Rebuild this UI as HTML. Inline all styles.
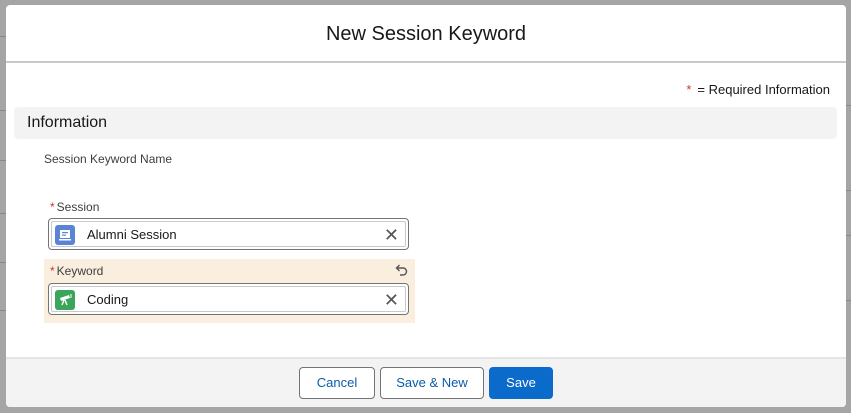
<!DOCTYPE html>
<html><head><meta charset="utf-8"><style>
*{box-sizing:border-box;margin:0;padding:0}
body{width:851px;height:413px;background:#a5a5a5;font-family:"Liberation Sans",sans-serif;position:relative;overflow:hidden;color:#181818}
.bgl{position:absolute;left:0;width:6px;height:1px;background:#888}
.bgr{position:absolute;left:846px;width:5px;height:1px;background:#888}
.modal{position:absolute;left:6px;top:5px;width:840px;height:402px;background:#fff;border-radius:4px;overflow:hidden}
.hdr{height:58px;border-bottom:2px solid #c9c9c9;text-align:center;font-size:20px;line-height:58px;color:#181818}
.req{position:absolute;right:16px;top:77px;font-size:13px}
.req b{color:#c23934;font-weight:normal;margin-right:6px}
.info{position:absolute;left:8px;top:102px;width:823px;height:32px;background:#f3f3f3;border-radius:4px;font-size:16px;line-height:32px;padding-left:13px}
.skn{position:absolute;left:38px;top:147px;font-size:12px;color:#3e3e3c}
.lbl{position:absolute;font-size:12px;color:#3e3e3c}
.lbl i{color:#c23934;font-style:normal;margin-right:2px}
.hl{position:absolute;left:38px;top:254px;width:371px;height:64px;background:#faefdf}
.inp{position:absolute;left:42px;width:361px;height:32px;border:1px solid #747474;border-radius:4px;padding:2px;background:#fff}
.inp .in{width:100%;height:100%;border:1px solid #c9c9c9;border-radius:2px;position:relative;font-size:13px;line-height:26px;padding-left:35px;background:#fff}
.ic{position:absolute;left:3px;top:3px;width:20px;height:20px;border-radius:3px}
.x{position:absolute;right:6px;top:0;font-size:18px;color:#555;line-height:26px}
.ftr{position:absolute;left:0;top:352px;width:840px;height:50px;background:#f3f3f3;border-top:2px solid #e5e5e5}
.btn{position:absolute;top:8px;height:32px;border:1px solid #747474;border-radius:4px;background:#fff;color:#0b5cab;font-size:13px;line-height:30px;text-align:center}
</style></head><body>
<div class="bgl" style="top:36px"></div><div class="bgl" style="top:110px"></div><div class="bgl" style="top:160px"></div><div class="bgl" style="top:213px"></div><div class="bgl" style="top:262px"></div><div class="bgl" style="top:310px"></div>
<div class="bgr" style="top:105px"></div><div class="bgr" style="top:190px"></div><div class="bgr" style="top:235px"></div><div class="bgr" style="top:300px"></div>
<div class="modal">
<div class="hdr">New Session Keyword</div>
<div class="req"><b>*</b>= Required Information</div>
<div class="info">Information</div>
<div class="skn">Session Keyword Name</div>
<div class="lbl" style="left:44px;top:195px"><i>*</i>Session</div>
<div class="inp" style="top:213px"><div class="in"><div class="ic" style="background:#5a84d6"><svg width="20" height="20"><rect x="5" y="5" width="10" height="8" fill="#fff"/><rect x="7" y="7" width="6" height="1.2" fill="#5a84d6"/><rect x="7" y="9.5" width="4" height="1.2" fill="#5a84d6"/><rect x="4" y="14" width="12" height="1.5" fill="#fff"/></svg></div>Alumni Session<span class="x">✕</span></div></div>
<div class="hl"></div>
<div class="lbl" style="left:44px;top:259px"><i>*</i>Keyword</div>
<svg style="position:absolute;left:388px;top:258px" width="14" height="14" viewBox="0 0 14 14"><path d="M3 5 H9 A3.5 3.5 0 0 1 9 12 H6" fill="none" stroke="#555" stroke-width="1.4"/><path d="M5.5 2 L2.5 5 L5.5 8" fill="none" stroke="#555" stroke-width="1.4"/></svg>
<div class="inp" style="top:278px"><div class="in"><div class="ic" style="background:#3ba55c"><svg width="20" height="20"><path d="M5 8 L14 5 L15 8 L6 11Z" fill="#fff"/><path d="M9 10 L7 15 M10 10 L12 15" stroke="#fff" stroke-width="1.4"/><path d="M16 4 V8" stroke="#fff" stroke-width="1"/></svg></div>Coding<span class="x">✕</span></div></div>
<div class="ftr">
<div class="btn" style="left:293px;width:76px">Cancel</div>
<div class="btn" style="left:374px;width:104px">Save &amp; New</div>
<div class="btn" style="left:483px;width:64px;background:#0b6bcb;border-color:#0b6bcb;color:#fff">Save</div>
</div>
</div>
</body></html>
